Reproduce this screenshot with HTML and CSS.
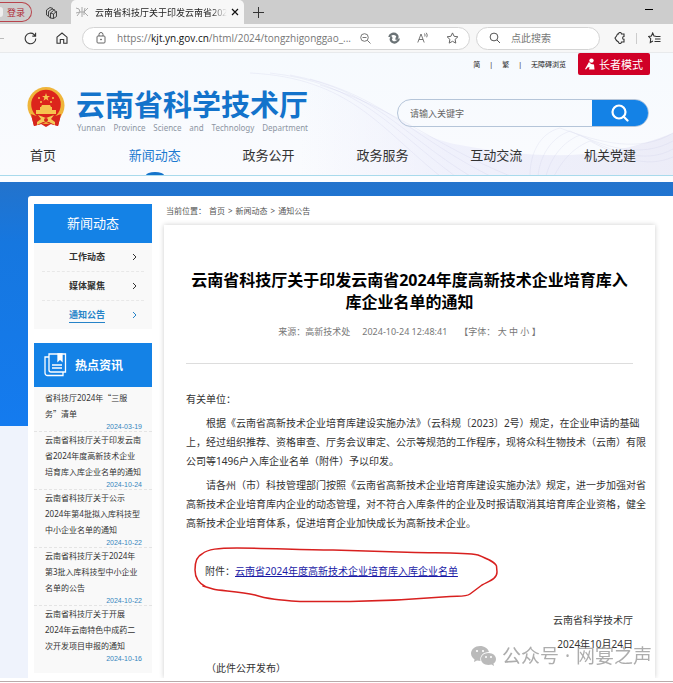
FILE: index.html
```html
<!DOCTYPE html>
<html lang="zh-CN">
<head>
<meta charset="utf-8">
<meta name="viewport" content="width=device-width, initial-scale=1">
<title>云南省科学技术厅</title>
<link rel="stylesheet" href="styles.css">
</head>
<body>
<div class="tabstrip">
  <button class="login"><span class="avatar"></span>登录</button>
  <button class="icon-btn workspaces" aria-label="工作区">
    <svg width="13" height="13" viewBox="0 0 13 13" fill="none" stroke="#333" stroke-width=".9"><path d="M1.500 9V4L5 1.500 8 2.500M1.500 9L3 10M3.500 10.500V5.500L7 3 10 4M3.500 10.500L5.500 12M5.500 12V7L8.500 4.500 11.500 5.500V10.500L8.500 12.500 5.500 12M8.500 8V12.500M5.500 7L8.500 8 11.500 5.500"/></svg>
  </button>
  <div class="tab">
    <svg class="favicon" width="13" height="12" viewBox="0 0 13 12" fill="none" stroke="#aaa"><path d="M0 2L3 3 4 6 0 7M4 6L1 10M4 6H8L12 2M8 6L12 10M6 6V1M6 6V11M8 6L9 2M8 6V9"/></svg>
    <span class="tab-title">云南省科技厅关于印发云南省202</span>
    <button class="icon-btn" aria-label="关闭标签页"><svg width="8" height="8" viewBox="0 0 8 8" stroke="#111" stroke-width="1.200"><path d="M1 1L7 7M7 1L1 7"/></svg></button>
  </div>
  <button class="icon-btn new-tab" aria-label="新建标签页"><svg width="11" height="11" viewBox="0 0 11 11" stroke="#333"><path d="M5.500 0V11M0 5.500H11"/></svg></button>
  <button class="icon-btn minimize" aria-label="最小化"><svg width="8" height="8" viewBox="0 0 8 8" stroke="#000"><path d="M0 3.500H8"/></svg></button>
</div>
<div class="toolbar">
  <span class="forward"></span>
  <button class="icon-btn reload" aria-label="刷新"><svg width="13" height="13" viewBox="0 0 13 13" fill="none" stroke="#333" stroke-width="1.100"><path d="M11.800 6.500A5.300 5.300 0 1 1 10 2.500L11.500 4M11.600 .8V4.100H8.300"/></svg></button>
  <button class="icon-btn home" aria-label="主页"><svg width="12" height="12" viewBox="0 0 12 12" fill="none" stroke="#333" stroke-width="1.100"><path d="M1 5.200L6 1 11 5.200V11.200H7.700V7.500H4.300V11.200H1Z"/></svg></button>
  <div class="address">
    <svg width="10" height="12" viewBox="0 0 10 12" fill="none" stroke="#666"><rect x="1" y="4" width="8" height="7" rx="1"/><path d="M3 4V2.500A2 2 0 0 1 7 2.500V4"/><circle cx="5" cy="7.500" r=".5" fill="#666"/></svg>
    <span class="url" role="textbox" aria-label="地址">https://<b>kjt.yn.gov.cn</b>/html/2024/tongzhigonggao_...</span>
    <svg width="11" height="11" viewBox="0 0 11 11" fill="none" stroke="#777"><circle cx="4.500" cy="4.500" r="3.800"/><path d="M7.300 7.300L10.500 10.500M2.500 4.500H6.500"/></svg>
    <svg width="12" height="12" viewBox="0 0 12 12" fill="none" stroke="#6b7376" stroke-width="2.400"><path d="M1.300 5C2.200 1.800 6.200 .8 8.500 2.800 10 4.200 9.600 6.800 7.500 7"/><path d="M10.800 6.500C10.500 9.800 6.500 11.500 4 9.600 2.300 8.300 2.300 6 4.200 5.200"/></svg>
    <svg width="12" height="12" viewBox="0 0 12 12" fill="none" stroke="#666" stroke-width=".9"><path d="M.8 10.500L4 2 7.200 10.500M2 7.500H6M7.500 1.500Q8.500 3 7.800 4.500M9.300 .8Q11 3 9.700 5.300"/></svg>
    <svg width="13" height="12" viewBox="0 0 13 12" fill="none" stroke="#666"><path d="M6.500 .9L8.100 4.300 11.900 4.800 9.100 7.400 9.800 11.100 6.500 9.300 3.200 11.100 3.900 7.400 1.100 4.800 4.900 4.300Z"/></svg>
  </div>
  <label class="quick">
    <svg width="12" height="12" viewBox="0 0 12 12" fill="none" stroke="#555"><circle cx="5" cy="5" r="3.900"/><path d="M7.800 7.800L11 11"/></svg>
    <input type="text" placeholder="点此搜索" aria-label="点此搜索">
  </label>
  <button class="icon-btn ext" aria-label="扩展"><svg width="12" height="12" viewBox="0 0 12 12" fill="none" stroke="#333" stroke-width="1.100"><path d="M3.500 2H4.500A1.500 1.500 0 0 1 7.500 2H10V4.500A1.400 1.400 0 0 0 10 7.300V10H7.500A1.500 1.500 0 0 1 4.500 10L2.500 8.500 1 6 2.500 4Z"/></svg></button>
  <span class="divider"></span>
  <button class="icon-btn favs" aria-label="收藏夹"><svg width="13" height="12" viewBox="0 0 13 12" fill="none" stroke="#333" stroke-width="1.100"><path d="M8 4.200L6 4 4.700 1 3.400 4 .7 4.500 2.700 6.700 2.300 10.500 5 9M7.500 4.500H12.500M7 7H12.500M6.500 9.500H12.500"/></svg></button>
</div>

<header class="site-header">
  <svg class="waves" viewBox="0 0 673 123" preserveAspectRatio="none" fill="none" aria-hidden="true">
    <defs><linearGradient id="haze" x1="0" x2="1" y1="0" y2="0"><stop offset="0" stop-color="#e9eafa" stop-opacity="0"/><stop offset=".4" stop-color="#e9eafa" stop-opacity=".6"/><stop offset="1" stop-color="#e9e9f6" stop-opacity=".8"/></linearGradient></defs>
    <path d="M300 30C380 38 400 82 460 92 530 105 600 110 673 80V123H300Z" fill="url(#haze)"/>
    <g stroke="#c4c6e2" stroke-width=".5" opacity=".45">
      <path d="M250 20C350 25 380 75 440 123M270 20C360 30 390 75 455 123M290 22C375 38 400 80 470 123M310 26C385 46 415 85 490 123M320 32C395 55 430 90 510 123"/>
      <path d="M530 123C530 100 540 80 560 75 600 90 640 100 673 80M538 123C540 104 550 85 570 78 605 94 640 106 673 88M546 123C550 108 560 90 580 82 610 98 645 112 673 96M554 123C560 112 570 96 590 88 620 104 645 116 673 104"/>
    </g>
  </svg>
  <div class="top-links">
    <a href="#">简</a><i>|</i><a href="#">繁</a><i>|</i><a href="#">无障碍浏览</a>
    <button class="elder">
      <svg width="10" height="12" viewBox="0 0 10 12" fill="#fff"><circle cx="6.500" cy="2.600" r="2.200"/><path d="M4 4L6 6 9 6.500 9.500 11.500H4L4.500 9 2.500 9.500 1 11.500 0 11 2 7.500Z"/></svg>长者模式
    </button>
  </div>
  <div class="brand-row">
    <svg class="emblem" width="38" height="41" viewBox="0 0 38 41">
      <path d="M4 28L7 39 14 37 19 40 24 37 31 39 34 28Z" fill="#d7261d"/>
      <circle cx="19" cy="18.500" r="18.500" fill="#efb53a"/>
      <circle cx="19" cy="17.500" r="14.800" fill="#dc241c"/>
      <g fill="#f6c34f"><path d="M19 6L20 9H23L20.600 10.800 21.500 13.700 19 12 16.500 13.700 17.400 10.800 15 9H18Z"/><circle cx="12" cy="11" r="1"/><circle cx="26" cy="11" r="1"/><circle cx="14" cy="15" r="1"/><circle cx="24" cy="15" r="1"/><path d="M14 20L15 18H23L24 20ZM13 20H25V23H13ZM9 23H29V27H9Z"/></g>
      <path d="M4 27C12 31 26 31 34 27L31 39 24 37 19 35 14 37 7 39Z" fill="#d7261d"/>
      <path d="M11 28L19 31 27 28 24 32 28 35 28 38 22 35H16L10 38V35L14 32Z" fill="#f3ca58"/>
      <circle cx="19" cy="33" r="2" fill="#d7261d"/>
    </svg>
    <div class="brand">
      <h1>云南省科学技术厅</h1>
      <p><span>Yunnan</span><span>Province</span><span>Science</span><span>and</span><span>Technology</span><span>Department</span></p>
    </div>
    <form class="search">
      <input type="text" placeholder="请输入关键字" aria-label="请输入关键字">
      <button type="button" aria-label="搜索"><svg width="18" height="18" viewBox="0 0 18 18" fill="none" stroke="#fff" stroke-width="2.200"><circle cx="8" cy="8" r="6.500"/><path d="M12.500 12.500L16.500 16.500" stroke-linecap="round"/></svg></button>
    </form>
  </div>
  <nav class="nav">
    <a href="#">首页</a><a href="#" class="active">新闻动态</a><a href="#">政务公开</a><a href="#">政务服务</a><a href="#">互动交流</a><a href="#">机关党建</a>
  </nav>
</header>

<div class="backdrop">
  <main class="panel">
    <aside class="sidebar">
      <h2 class="side-title">新闻动态</h2>
      <ul class="menu">
        <li><a href="#"><span>工作动态</span><svg width="5" height="8" viewBox="0 0 5 8" fill="none" stroke="currentColor"><path d="M1 1L4 4 1 7"/></svg></a></li>
        <li><a href="#"><span>媒体聚焦</span><svg width="5" height="8" viewBox="0 0 5 8" fill="none" stroke="currentColor"><path d="M1 1L4 4 1 7"/></svg></a></li>
        <li><a href="#" class="current"><span>通知公告</span><svg width="5" height="8" viewBox="0 0 5 8" fill="none" stroke="currentColor"><path d="M1 1L4 4 1 7"/></svg></a></li>
      </ul>
      <h2 class="hot-title">
        <svg width="23" height="24" viewBox="0 0 23 24" fill="none" stroke="#fff" stroke-width="1.300"><path d="M5 1H21.500V19H7A2 2 0 0 1 5 17ZM5 4H1V20A2.500 2.500 0 0 0 3.500 22.500H19V19M8 12H18M8 15H18"/><path d="M14 1H18V8L16 6 14 8Z" fill="#fff"/></svg>
        热点资讯
      </h2>
      <ul class="hot">
        <li><a href="#">省科技厅2024年<q>“</q>三服<br>务<q>”</q>清单</a><time>2024-03-19</time></li>
        <li><a href="#">云南省科技厅关于印发云南<br>省2024年度高新技术企业<br>培育库入库企业名单的通知</a><time>2024-10-24</time></li>
        <li><a href="#">云南省科技厅关于公示<br>2024年第4批拟入库科技型<br>中小企业名单的通知</a><time>2024-10-22</time></li>
        <li><a href="#">云南省科技厅关于2024年<br>第3批入库科技型中小企业<br>名单的公告</a><time>2024-10-22</time></li>
        <li><a href="#">云南省科技厅关于开展<br>2024年云南特色中成药二<br>次开发项目申报的通知</a><time>2024-10-16</time></li>
      </ul>
    </aside>
    <section class="content">
      <div class="crumbs"><span>当前位置：</span><a href="#">首页</a><span>&gt;</span><a href="#">新闻动态</a><span>&gt;</span><a href="#">通知公告</a></div>
      <article class="card">
        <h2>云南省科技厅关于印发云南省2024年度高新技术企业培育库入<br>库企业名单的通知</h2>
        <div class="meta"><span>来源：高新技术处</span><span>2024-10-24 12:48:41</span><span>【字体： 大 中 小 】</span></div>
        <div class="text">
          <p>有关单位：</p>
          <p class="indent">根据《云南省高新技术企业培育库建设实施办法》（云科规〔2023〕2号）规定，在企业申请的基础<br>上，经过组织推荐、资格审查、厅务会议审定、公示等规范的工作程序，现将众科生物技术（云南）有限<br>公司等1496户入库企业名单（附件）予以印发。</p>
          <p class="indent">请各州（市）科技管理部门按照《云南省高新技术企业培育库建设实施办法》规定，进一步加强对省<br>高新技术企业培育库内企业的动态管理，对不符合入库条件的企业及时报请取消其培育库企业资格，健全<br>高新技术企业培育体系，促进培育企业加快成长为高新技术企业。</p>
          <div class="attach">附件：<a href="#">云南省2024年度高新技术企业培育库入库企业名单</a>
            <svg class="ring" width="306" height="58" viewBox="193 547 306 58" fill="none" stroke="#d8201f" stroke-width="1.500" stroke-linecap="round" stroke-linejoin="round" aria-hidden="true"><path d="M206 588C198 584 195 577 195 571 195 563 197 557 202 555 208 550 218 549 237 549 270 549 300 551 333 551L415 553.500C440 554 465 553 478 556 488 560 495 563 496.500 567L497 573C497 580 489 582 482 586L470 595C466 598 460 597 450 597.500 420 600 380 602 350 602.500H300C280 601 267 600 255 596 240 592 220 592 213 590L203 587"/></svg>
          </div>
          <p class="sign">云南省科学技术厅</p>
          <p class="sign">2024年10月24日</p>
          <p class="note">（此件公开发布）</p>
        </div>
        <div class="watermark">
          <svg width="25" height="20" viewBox="0 0 25 20" fill="#aaa"><path d="M9 0C4 0 0 3.500 0 7.500 0 10 1.500 12 3.500 13.300L3 16 6 14.500 9.500 15C8.500 10 12 6 18 6 17 2.500 13.500 0 9 0Z"/><path d="M17.500 7C13 7 10 9.800 10 13S13 19 17.500 19L20.500 18.500 23 20 22.500 17.500C24 16.500 25 15 25 13 25 9.800 22 7 17.500 7Z"/><g fill="#fff"><circle cx="6" cy="5" r="1.100"/><circle cx="12" cy="5" r="1.100"/><circle cx="15" cy="11" r="1"/><circle cx="20" cy="11" r="1"/></g></svg>
          <span>公众号</span><span>·</span><span>网宴之声</span>
        </div>
      </article>
    </section>
  </main>
</div>
<div class="edge"></div>
</body>
</html>
```

FILE: styles.css
```css
* { box-sizing: border-box; }
body {
  margin: 0;
  background: #fff;
  color: #333;
  font-family: "Noto Sans", "Noto Sans CJK SC", sans-serif;
  font-size: 10px;
  overflow-x: hidden;
}
h1, h2, p, ul { margin: 0; padding: 0; }
ul { list-style: none; }
a { color: inherit; text-decoration: none; }
button, input { font: inherit; border: 0; padding: 0; background: none; min-width: 0; outline: 0; }
svg { flex: none; display: block; }

/* browser chrome */
.tabstrip { display: flex; align-items: center; height: 24px; background: #cdcdcd; }
.icon-btn { display: flex; align-items: center; justify-content: center; }
.login {
  display: flex; align-items: center; gap: 4px;
  height: 20px; width: 32px;
  border: 1px solid #b8444c; border-left: 0;
  border-radius: 0 10px 10px 0;
  color: #b02a37; font-size: 9px; white-space: nowrap;
}
.avatar { width: 3px; height: 10px; background: #eee; border-radius: 0 5px 5px 0; }
.workspaces { margin: 0 13px; }
.tab {
  display: flex; align-items: center; gap: 6px;
  width: 173px; height: 24px; padding: 0 8px 0 5px;
  background: #f7f7f7; border-radius: 5px 5px 0 0;
}
.tab-title {
  flex: 1; white-space: nowrap;
  font-size: 9px; color: #222;
  mask-image: linear-gradient(to right, #000 88%, transparent);
}
.new-tab { margin-left: 9px; }
.minimize { margin: 0 20px 4px auto; }
.toolbar {
  display: flex; align-items: center;
  height: 29px; background: #f7f7f7; border-bottom: 1px solid #e8eaec;
}
.forward { flex: none; width: 4px; height: 1px; background: #bbb; }
.reload { margin-left: 20px; }
.home { margin: 0 14px 0 19px; }
.address, .quick {
  display: flex; align-items: center;
  height: 23px; background: #fff; border: 1px solid #d4d4d4; border-radius: 12px;
}
.address { flex: 1; min-width: 0; gap: 17px; padding: 0 10px 0 13px; }
.url { flex: 1; margin: 0 -8px 0 -6px; color: #777; white-space: nowrap; font-family: "Open Sans", sans-serif; }
.url b { color: #111; font-weight: 400; }
.quick { flex: none; width: 124px; margin-left: 6px; padding-left: 12px; gap: 10px; }
.quick input { width: 80px; }
.quick input::placeholder { color: #777; }
.ext { margin-left: 14px; }
.divider { width: 1px; height: 11px; margin: 0 11px 0 10px; background: #ccc; }
.favs { margin-right: 12px; }

/* site header */
.site-header {
  position: relative;
  height: 129px;
  background: linear-gradient(to bottom, #f6fafe, #fafbfe);
  border-bottom: 6px solid #fbfdff;
}
.waves { position: absolute; inset: 0; width: 100%; height: 100%; }
.top-links {
  position: relative;
  display: flex; align-items: center; justify-content: flex-end; gap: 9px;
  height: 22px; padding-right: 23px;
  font-size: 7px; color: #222;
}
.top-links i { font-style: normal; }
.elder {
  display: flex; align-items: center; justify-content: center; gap: 4px;
  width: 72px; height: 22px; margin-left: 3px;
  border-radius: 2px; background: #d00027; color: #fff; font-size: 11px; white-space: nowrap;
}
.brand-row { position: relative; display: flex; padding: 12px 24px 0 27px; }
.brand { margin-left: 11px; }
.brand h1 { font-size: 29px; line-height: 36px; color: #1373cb; font-weight: 700; white-space: nowrap; }
.brand p { display: flex; justify-content: space-between; color: #8d96a3; font-size: 8px; line-height: 10px; padding-left: 1px; }
.search {
  display: flex; width: 252px; height: 28px; margin: 12px 0 0 auto;
  border: 1px solid #b5c5d9; border-radius: 14px; overflow: hidden;
}
.search input { flex: 1; padding-left: 12px; font-size: 9px; }
.search input::placeholder { color: #666; }
.search button { display: flex; align-items: center; justify-content: center; width: 56px; background: #1482e6; }
.nav {
  position: absolute; left: 0; right: 0; bottom: 0;
  display: flex; justify-content: space-between;
  height: 32px; padding: 0 37px 0 30px;
  border-bottom: 1px solid #a8daec;
  font-size: 13px; line-height: 22px;
}
.nav a { position: relative; }
.nav .active { color: #1d7ad0; }
.nav a:first-child { margin-right: 11px; }
.nav .active::after {
  content: ""; position: absolute; left: 17px; bottom: 0;
  width: 18px; height: 3px; border-radius: 50% 50% 0 0 / 100% 100% 0 0; background: #1373cb;
}

/* page body */
.backdrop {
  padding: 14px 0 0 28px;
  background: linear-gradient(to bottom, #2373cc 0, #1677df 60px, #147bef 244px, #eff3fc 244px);
}
.panel {
  display: flex; gap: 12px; padding: 8px 18px 0 6px;
  background: #fff; border-radius: 3px 0 0 0;
}
.sidebar { flex: none; width: 118px; }
.side-title {
  height: 39px; background: #1482e6; color: #fff;
  font-size: 13px; font-weight: 400; line-height: 39px; text-align: center;
}
.menu { padding: 0 8px; background: #f9f9f9; }
.menu li + li { border-top: 1px dashed #e8e8e8; }
.menu a {
  display: flex; align-items: center; justify-content: space-between;
  height: 28px; padding: 0 7px 0 27px;
  font-size: 9px; font-weight: 700; color: #333;
}
.menu span { line-height: 14px; border-bottom: 1px solid transparent; }
.menu .current { color: #2683c8; }
.menu .current span { border-color: #2683c8; }
.hot-title {
  display: flex; align-items: center; gap: 8px;
  height: 44px; margin-top: 14px; padding-left: 10px;
  background: #1482e6; color: #fff; font-size: 12px; font-weight: 700;
}
.hot { padding: 3px 0 10px; background: #f9f9f9; }
.hot li { padding: 0 10px 0 11px; border-bottom: 1px dashed #e4e4e4; }
.hot li:last-child { border: 0; }
.hot a { display: block; font-size: 8px; line-height: 16px; white-space: nowrap; }
.hot q { quotes: none; font-family: "Noto Sans CJK SC", sans-serif; line-height: 1; }
.hot time {
  display: block; text-align: right; color: #3585bd;
  font: 7px/9px "Liberation Sans", sans-serif;
}
.content { flex: 1; min-width: 0; display: flex; flex-direction: column; }
.crumbs { display: flex; gap: 3px; height: 21px; padding-left: 2px; font-size: 8px; line-height: 14px; color: #555; white-space: nowrap; }
.card { position: relative; flex: 1; padding: 44px 0 0 22px; background: #fff; box-shadow: 0 0 5px rgba(0, 0, 0, .2); clip-path: inset(-6px -6px 0 -6px); }
.card h2 { margin-right: 22px; font-size: 16px; line-height: 22px; color: #000; text-align: center; white-space: nowrap; }
.meta {
  display: flex; justify-content: center; gap: 12px;
  margin-right: 22px; padding: 12px 0 24px;
  border-bottom: 1px solid #ddd;
  color: #777; font-size: 9px; line-height: 14px; white-space: nowrap;
}
.text { padding-top: 26px; font-size: 10px; line-height: 19px; white-space: nowrap; }
.text p { margin-bottom: 5px; }
.text .indent { text-indent: 20px; }
.attach { position: relative; margin: 29px 0 30px; padding-left: 19px; }
.attach a { color: #1a1aa6; text-decoration: underline; }
.ring { position: absolute; left: 7px; top: -16px; }
.sign { padding-right: 22px; text-align: right; }
.text .note { margin: 0; padding-left: 20px; }
.watermark {
  position: absolute; right: 3px; bottom: 10px;
  display: flex; align-items: center; gap: 6px;
  color: #999; opacity: .8; font-size: 19px; line-height: 24px; white-space: nowrap;
}
.edge { height: 4px; border-bottom: 1px solid #b9aaaa; background: #fff; }
```
